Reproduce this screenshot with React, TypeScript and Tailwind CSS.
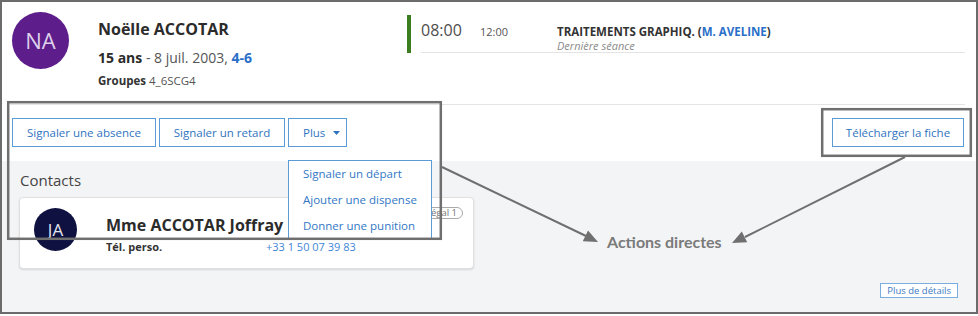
import { ChevronDown } from "lucide-react";

// Shared look for the blue outlined action buttons
const actionBtn =
	"h-[29px] flex items-center justify-center border border-[#5b9bd5] bg-white text-[11.5px] text-[#2f74c0] whitespace-nowrap";

function Header() {
	return (
		<div className="flex h-[102px] shrink-0">
			<div className="ml-[10px] mt-[10px] size-[57px] shrink-0 rounded-full bg-[#5d1d8b] flex items-center justify-center text-[22px] text-[#ddd0ea]">
				NA
			</div>
			<div className="ml-[29px] w-[309px] pt-[17px]">
				<div className="text-[16px] leading-[20px] font-bold text-[#2b2b2b]">
					Noëlle ACCOTAR
				</div>
				<div className="mt-[9px] text-[14px] leading-[20px] text-[#555]">
					<span className="font-bold text-[#2b2b2b]">15 ans</span> - 8 juil.
					2003, <span className="font-bold text-[#2a6fc9]">4-6</span>
				</div>
				<div className="mt-[5px] text-[11.5px] leading-[16px] text-[#555]">
					<span className="font-bold text-[#333]">Groupes</span> 4_6SCG4
				</div>
			</div>

			{/* Current lesson */}
			<div className="mt-[13px] flex h-[38px]">
				<div className="w-[4px] bg-[#3b7d1f]" />
				<div className="ml-[10px] w-[544px] border-b border-[#e4e4e4] pt-[4px] flex items-baseline">
					<div className="w-[59px] text-[16px] leading-[22px] text-[#4d4d4d]">
						08:00
					</div>
					<div className="w-[77px] text-[11px] leading-[16px] text-[#555]">
						12:00
					</div>
					<div>
						<div className="text-[11.5px] leading-[14px] font-bold text-[#333]">
							TRAITEMENTS GRAPHIQ. (
							<span className="text-[#2a6fc9]">M. AVELINE</span>)
						</div>
						<div className="text-[11px] leading-[14px] italic text-[#8a8a8a]">
							Dernière séance
						</div>
					</div>
				</div>
			</div>
		</div>
	);
}

function ActionBar() {
	return (
		<div className="h-[56px] shrink-0 flex justify-between pl-[10px] pr-[12px] pt-[13px]">
			<div className="flex gap-[3px]">
				<button className={`${actionBtn} w-[144px]`}>Signaler une absence</button>
				<button className={`${actionBtn} w-[126px]`}>Signaler un retard</button>
				<div className="relative z-10">
					<button className={`${actionBtn} w-[59px] !justify-start pl-[14px]`}>
						Plus
						<svg width="7" height="4" viewBox="0 0 7 4" className="ml-[8px]">
							<path d="M0 0h7L3.5 4z" fill="#2f74c0" />
						</svg>
					</button>
					{/* open dropdown menu */}
					<div className="absolute left-0 top-full -mt-px w-[144px] border border-[#5b9bd5] bg-white">
						{["Signaler un départ", "Ajouter une dispense", "Donner une punition"].map(
							(item) => (
								<div
									key={item}
									className="h-[26px] pl-[14px] text-[11.5px] leading-[26px] text-[#3277c4] whitespace-nowrap"
								>
									{item}
								</div>
							),
						)}
					</div>
				</div>
			</div>
			<button className={`${actionBtn} w-[132px]`}>Télécharger la fiche</button>
		</div>
	);
}

function Contacts() {
	return (
		<div className="flex-1 bg-[#f3f4f6] pl-[17px] pt-[9px] flex flex-col">
			<div className="ml-[1px] text-[15px] leading-[20px] text-[#444]">Contacts</div>
			<div className="mt-[7px] w-[455px] h-[72px] bg-white border border-[#e0e0e0] rounded-[4px] shadow-[0_1px_2px_rgba(0,0,0,0.12)] flex items-start">
				<div className="ml-[14px] mt-[10px] size-[43px] shrink-0 rounded-full bg-[#0f1240] flex items-center justify-center text-[17px] text-[#e3e6f2]">
					JA
				</div>
				<div className="ml-[29px] mt-[16px]">
					<div className="text-[16px] leading-[22px] font-bold text-[#2b2b2b]">
						Mme ACCOTAR Joffray
					</div>
					<div className="mt-[3px] flex text-[11px] leading-[16px]">
						<div className="w-[160px] font-bold text-[#333]">Tél. perso.</div>
						<div className="text-[#3f86d6]">+33 1 50 07 39 83</div>
					</div>
				</div>
				<div className="ml-auto mr-[10px] mt-[9px] h-[12px] border border-[#aaa] rounded-full px-[5px] text-[9.5px] leading-[10px] text-[#777]">
					Légal 1
				</div>
			</div>
			<button className="self-end mt-[14px] mr-[18px] h-[15px] border border-[#7aaee0] bg-white px-[6px] text-[9.5px] leading-[13px] text-[#3b79c4]">
				Plus de détails
			</button>
		</div>
	);
}

// Callout drawn over the screenshot: boxes, arrows and label
function Annotations() {
	const c = "#6f6f6f";
	return (
		<>
			<svg
				width="978"
				height="314"
				className="absolute left-[-2px] top-[-2px] z-20 pointer-events-none"
			>
				<rect x="8.2" y="102.2" width="432.6" height="136.6" fill="none" stroke={c} strokeWidth="2.5" />
				<rect x="822.2" y="109.2" width="148.6" height="46.6" fill="none" stroke={c} strokeWidth="2.5" />
				<line x1="442" y1="167" x2="586" y2="236" stroke={c} strokeWidth="2" />
				<polygon points="598,242 582.8,241.3 588,230.5" fill={c} />
				<line x1="905" y1="157" x2="745" y2="237" stroke={c} strokeWidth="2" />
				<polygon points="732,243 741.8,231.4 747.2,242.2" fill={c} />
			</svg>
			<div className="absolute left-[605px] top-[230px] z-20 font-['Lato',sans-serif] text-[16px] leading-[20px] font-bold text-[#7a7a7a]">
				Actions directes
			</div>
		</>
	);
}

export default function App() {
	return (
		<div className="relative w-[978px] h-[314px] overflow-hidden border-2 border-[#6b6b6b] bg-white font-['Open_Sans',sans-serif] flex flex-col">
			<Header />
			<div className="ml-[8px] w-[955px] h-px shrink-0 bg-[#e4e4e4]" />
			<ActionBar />
			<Contacts />
			<Annotations />
		</div>
	);
}
